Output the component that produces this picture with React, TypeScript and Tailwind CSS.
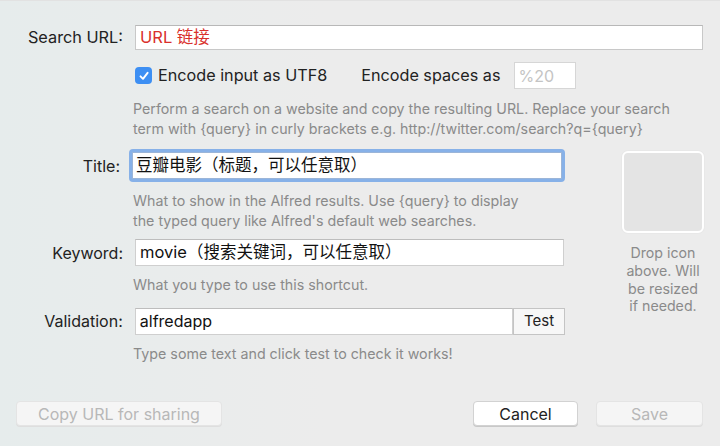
import React from "react";

const font = { fontFamily: 'Inter, "Noto Sans CJK SC", sans-serif' };

function Help({ children }: { children: React.ReactNode }) {
  return <div className="text-[14.25px] leading-[19.5px] text-[#8a8a8a]">{children}</div>;
}

export default function App() {
  return (
    <div
      className="w-[720px] h-[446px] bg-[#ececec] bg-[linear-gradient(90deg,#e6ecec_0%,#ececec_45%)] border-t border-[#e2e2e2] text-[#222] text-[16px] overflow-hidden relative"
      style={font}
    >
      {/* Search URL */}
      <div className="flex items-center mt-[24px]">
        <div className="w-[124px] text-right pr-[1px] text-[16.3px]">Search URL:</div>
        <div className="ml-[11px] w-[568px] h-[25px] bg-white border border-[#c8c8c8] border-t-[#b8b8b8] flex items-center pl-[4px] text-[#d9302c] text-[16.5px]">
          URL 链接
        </div>
      </div>

      {/* Encode row */}
      <div className="flex items-center ml-[135px] mt-[12px] h-[27px]">
        <div className="w-[17px] h-[17px] rounded-[4px] bg-[#3d8ff3] flex items-center justify-center">
          <svg width="12" height="12" viewBox="0 0 12 12">
            <path d="M2.5 6.3 L5 8.8 L9.6 2.8" fill="none" stroke="white" strokeWidth="1.9" strokeLinecap="round" strokeLinejoin="round" />
          </svg>
        </div>
        <div className="ml-[6px] text-[16.2px]">Encode input as UTF8</div>
        <div className="ml-[34px] text-[16.2px]">Encode spaces as</div>
        <div className="ml-[13px] w-[62px] h-[27px] bg-white border border-[#d6d6d6] flex items-center pl-[4px] text-[#c4c4c4]">
          %20
        </div>
      </div>

      <div className="ml-[133px] mt-[10px]">
        <Help>
          Perform a search on a website and copy the resulting URL. Replace your search
          <br />
          term with {"{query}"} in curly brackets e.g. http://twitter.com/search?q={"{query}"}
        </Help>
      </div>

      <div className="flex mt-[11px]">
        <div className="w-[565px]">
          {/* Title */}
          <div className="flex items-center">
            <div className="w-[124px] text-right pr-[1px]">Title:</div>
            <div className="ml-[8px] rounded-[4px] border-[3px] border-[#87b1e8] p-0">
              <div className="w-[430px] h-[27px] bg-white border border-[#9bb5d8] flex items-center pl-[3px] text-[#111] text-[16.5px]">
                豆瓣电影（标题，可以任意取）
              </div>
            </div>
          </div>
          <div className="ml-[133px] mt-[9px]">
            <Help>
              What to show in the Alfred results. Use {"{query}"} to display
              <br />
              the typed query like Alfred's default web searches.
            </Help>
          </div>

          {/* Keyword */}
          <div className="flex items-center mt-[9px]">
            <div className="w-[124px] text-right pr-[1px]">Keyword:</div>
            <div className="ml-[11px] w-[429px] h-[27px] bg-white border border-[#cfcfcf] border-t-[#bdbdbd] flex items-center pl-[4px] text-[#111] text-[16.5px]">
              movie（搜索关键词，可以任意取）
            </div>
          </div>
          <div className="ml-[133px] mt-[9px]">
            <Help>What you type to use this shortcut.</Help>
          </div>

          {/* Validation */}
          <div className="flex items-center mt-[13px]">
            <div className="w-[124px] text-right pr-[1px]">Validation:</div>
            <div className="ml-[11px] w-[379px] h-[27px] bg-white border border-[#cfcfcf] border-t-[#bdbdbd] flex items-center pl-[4px] text-[#111]">
              alfredapp
            </div>
            <div className="w-[52px] h-[27px] bg-[#f7f7f7] border border-[#c4c4c4] flex items-center justify-center text-[#222] text-[15px]">
              Test
            </div>
          </div>
          <div className="ml-[133px] mt-[9px]">
            <Help>Type some text and click test to check it works!</Help>
          </div>
        </div>

        {/* Icon well */}
        <div className="ml-[57px] mt-[2px] flex flex-col items-center w-[82px]">
          <div className="w-[82px] h-[82px] rounded-[6px] border-[2px] border-white bg-[#e4e4e4] shadow-[0_0_0_1px_#e8e8e8]" />
          <div className="mt-[11px] text-center text-[14.2px] leading-[17.8px] text-[#8a8a8a] whitespace-nowrap">
            Drop icon
            <br />
            above. Will
            <br />
            be resized
            <br />
            if needed.
          </div>
        </div>
      </div>

      {/* Bottom buttons */}
      <div className="absolute left-0 right-0 top-[400px] flex items-center">
        <div className="ml-[16px] w-[206px] h-[25px] rounded-[4px] bg-[#f5f5f5] border border-[#e4e4e4] shadow-[0_1px_0_#dedede] flex items-center justify-center text-[#b8b8b8]">
          Copy URL for sharing
        </div>
        <div className="ml-auto w-[105px] h-[25px] rounded-[4px] bg-white border border-[#d2d2d2] shadow-[0_1px_0_#c8c8c8] flex items-center justify-center text-[#222]">
          Cancel
        </div>
        <div className="ml-[18px] mr-[17px] w-[107px] h-[25px] rounded-[4px] bg-[#f5f5f5] border border-[#e4e4e4] shadow-[0_1px_0_#dedede] flex items-center justify-center text-[#b8b8b8]">
          Save
        </div>
      </div>
    </div>
  );
}
